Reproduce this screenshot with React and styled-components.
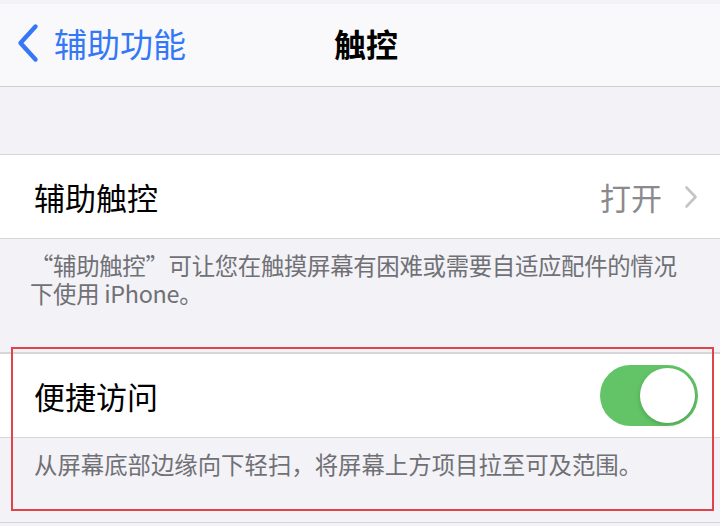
import React, { useState } from 'react';
import styled, { createGlobalStyle } from 'styled-components';

const GlobalStyle = createGlobalStyle`
  html, body {
    margin: 0;
    padding: 0;
    background: #f2f2f7;
  }
  body {
    font-family: 'Noto Sans CJK SC', 'Noto Sans', sans-serif;
    -webkit-font-smoothing: antialiased;
  }
`;

const App = () => {
  const [reachability, setReachability] = useState(true);

  return (
    <>
      <GlobalStyle />
      <StyledScreen>
        <NavBar>
          <BackButton>
            <svg width="24" height="40" viewBox="0 0 24 40" fill="none">
              <path
                d="M19.5 3.5 L4.5 20 L19.5 36.5"
                stroke="#3478f6"
                strokeWidth="4.4"
                strokeLinecap="round"
                strokeLinejoin="round"
              />
            </svg>
            <span>辅助功能</span>
          </BackButton>
          <NavTitle>触控</NavTitle>
        </NavBar>

        <Spacer />

        <Group>
          <Row>
            <RowLabel>辅助触控</RowLabel>
            <RowValue>
              打开
              <svg width="14" height="24" viewBox="0 0 14 24" fill="none">
                <path
                  d="M2.5 2.5 L11.5 12 L2.5 21.5"
                  stroke="#c4c4c7"
                  strokeWidth="2.6"
                  strokeLinecap="round"
                  strokeLinejoin="round"
                />
              </svg>
            </RowValue>
          </Row>
        </Group>
        <Footer $tall>
          “辅助触控”可让您在触摸屏幕有困难或需要自适应配件的情况下使用 iPhone。
        </Footer>

        <Highlight>
          <Group>
            <Row>
              <RowLabel>便捷访问</RowLabel>
              <Toggle
                $on={reachability}
                onClick={() => setReachability(!reachability)}
              >
                <Knob $on={reachability} />
              </Toggle>
            </Row>
          </Group>
          <Footer>从屏幕底部边缘向下轻扫，将屏幕上方项目拉至可及范围。</Footer>
          <Annotation />
        </Highlight>
      </StyledScreen>
    </>
  );
};

export default App;

// STYLING
const StyledScreen = styled.div`
  width: 720px;
  height: 526px;
  overflow: hidden;
  background: #f2f2f7;
  display: flex;
  flex-direction: column;
`;

const NavBar = styled.div`
  position: relative;
  height: 82px;
  margin-top: 4px;
  background: #f9f9fb;
  border-bottom: 1px solid #cfcfd3;
  display: flex;
  align-items: center;
  justify-content: center;
`;

const BackButton = styled.div`
  position: absolute;
  left: 16px;
  top: 0;
  bottom: 4px;
  display: flex;
  align-items: center;
  gap: 14px;
  color: #3478f6;
  font-size: 33px;
  svg {
    flex-shrink: 0;
  }
`;

const NavTitle = styled.div`
  font-size: 32px;
  font-weight: 700;
  color: #000;
  margin-bottom: 4px;
  margin-left: 12px;
`;

const Spacer = styled.div`
  height: 67px;
  border-bottom: 1px solid #d6d6da;
`;

const Group = styled.div`
  background: #fff;
  border-bottom: 1px solid #d6d6da;
`;

const Row = styled.div`
  height: 83px;
  padding: 0 22px 0 34px;
  display: flex;
  align-items: center;
  justify-content: space-between;
`;

const RowLabel = styled.div`
  font-size: 31px;
  color: #000;
`;

const RowValue = styled.div`
  display: flex;
  align-items: center;
  gap: 22px;
  font-size: 31px;
  color: #8a8a8e;
`;

const Footer = styled.div`
  padding: ${({ $tall }) => ($tall ? '12px 26px 0 30px' : '12px 26px 0 34px')};
  height: ${({ $tall }) => ($tall ? '101px' : '72px')};
  font-size: 23.4px;
  letter-spacing: ${({ $tall }) => ($tall ? '-0.3px' : '0')};
  line-height: 28px;
  color: #707075;
  border-bottom: 1px solid #d6d6da;
  box-sizing: content-box;
`;

const Highlight = styled.div`
  position: relative;
  border-top: 1px solid #d6d6da;
`;

const Annotation = styled.div`
  position: absolute;
  left: 11px;
  right: 6px;
  top: -7px;
  height: 160px;
  border: 2.5px solid #e2434b;
  pointer-events: none;
`;

const Toggle = styled.div`
  width: 98px;
  height: 61px;
  border-radius: 31px;
  background: ${({ $on }) => ($on ? '#62c466' : '#e9e9eb')};
  position: relative;
  cursor: pointer;
`;

const Knob = styled.div`
  position: absolute;
  top: 3px;
  left: ${({ $on }) => ($on ? '40px' : '3px')};
  width: 55px;
  height: 55px;
  border-radius: 50%;
  background: #fff;
  box-shadow: 0 2px 5px rgba(0, 0, 0, 0.18);
`;
